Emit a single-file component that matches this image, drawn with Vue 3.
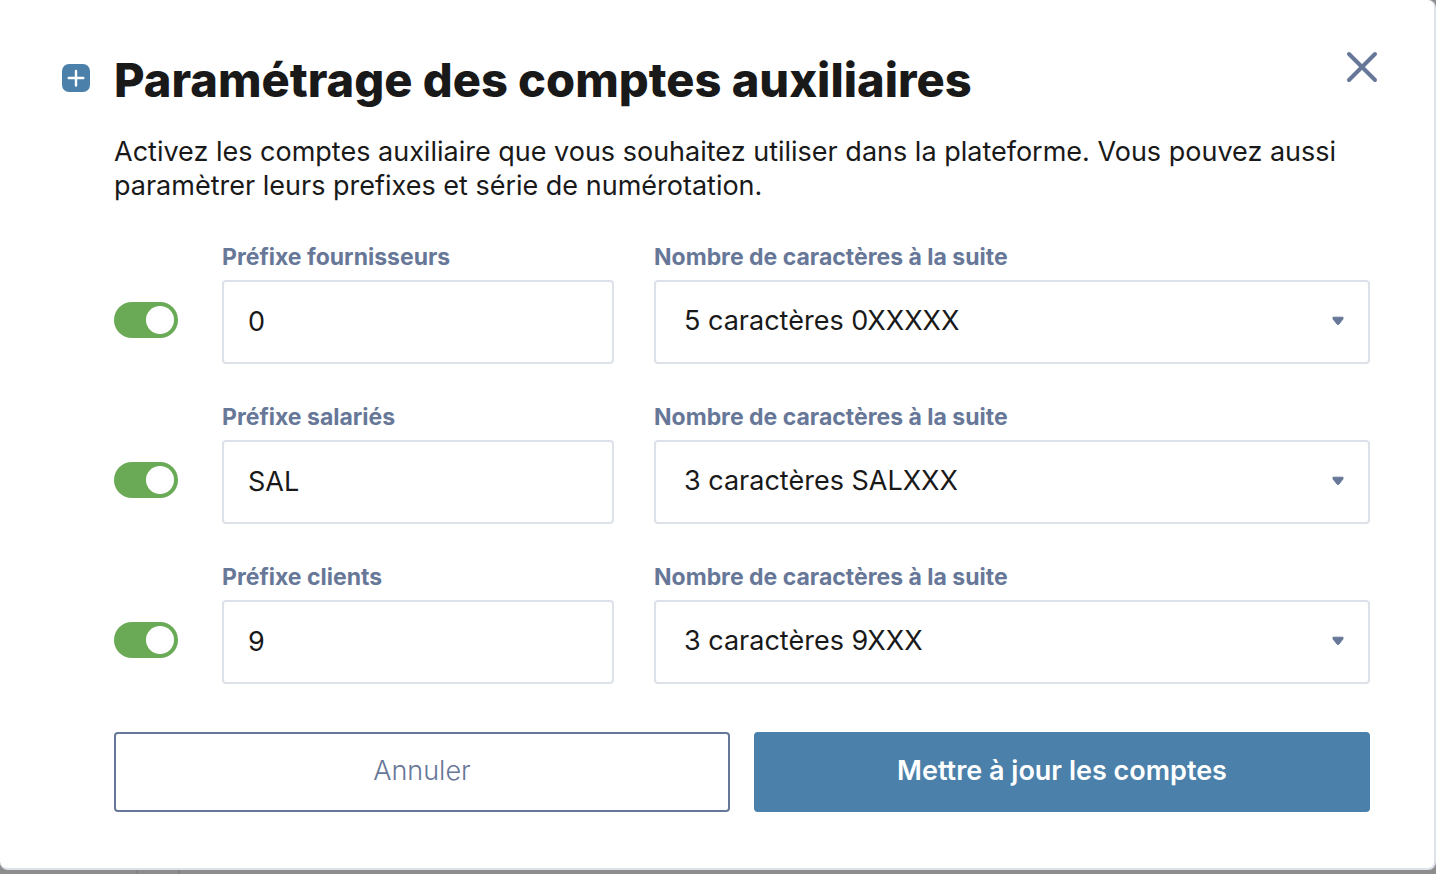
<script setup>
import { reactive } from 'vue'

const accounts = reactive([
  { id: 'fournisseurs', label: 'Préfixe fournisseurs', enabled: true, prefix: '0', length: '5 caractères 0XXXXX' },
  { id: 'salaries', label: 'Préfixe salariés', enabled: true, prefix: 'SAL', length: '3 caractères SALXXX' },
  { id: 'clients', label: 'Préfixe clients', enabled: true, prefix: '9', length: '3 caractères 9XXX' }
])
</script>

<template>
  <div class="backdrop">
    <section class="modal" role="dialog" aria-labelledby="dialog-title">
      <header class="header">
        <svg class="plus" viewBox="0 0 28 28" aria-hidden="true">
          <rect width="28" height="28" rx="7" fill="#4a80aa" />
          <path d="M14 7v14.5M6.7 14h14.6" stroke="#fff" stroke-width="2.4" stroke-linecap="round" />
        </svg>
        <h1 id="dialog-title" class="title">Paramétrage des comptes auxiliaires</h1>
        <button class="close" type="button" aria-label="Fermer">
          <svg viewBox="0 0 32 32" aria-hidden="true">
            <path d="M3 3l26 26M29 3L3 29" stroke="#677798" stroke-width="4" stroke-linecap="round" />
          </svg>
        </button>
      </header>

      <form class="content" @submit.prevent>
        <p class="intro">
          Activez les comptes auxiliaire que vous souhaitez utiliser dans la plateforme. Vous pouvez aussi
          paramètrer leurs prefixes et série de numérotation.
        </p>

        <div class="rows">
          <div v-for="account in accounts" :key="account.id" class="row">
            <input v-model="account.enabled" class="toggle" type="checkbox" :aria-label="account.label" />
            <div class="field prefix">
              <label :for="`prefix-${account.id}`">{{ account.label }}</label>
              <input :id="`prefix-${account.id}`" v-model="account.prefix" class="control" type="text" />
            </div>
            <div class="field length">
              <label :for="`length-${account.id}`">Nombre de caractères à la suite</label>
              <div class="select">
                <select :id="`length-${account.id}`" v-model="account.length" class="control">
                  <option>{{ account.length }}</option>
                </select>
                <svg class="caret" viewBox="0 0 12 10" aria-hidden="true">
                  <path d="M1 1.2h10v1.8L6.8 8.2q-.8.8-1.6 0L1 3z" fill="#677798" stroke="#677798" stroke-linejoin="round" />
                </svg>
              </div>
            </div>
          </div>
        </div>

        <div class="actions">
          <button class="button cancel" type="button">Annuler</button>
          <button class="button submit" type="submit">Mettre à jour les comptes</button>
        </div>
      </form>
    </section>
  </div>
</template>

<style>
body {
  background: linear-gradient(90deg, transparent 136px, #838286 136px 138px, transparent 138px 178px, #838286 178px 180px, transparent 180px) #8e8d8d;
}
</style>

<style scoped>
.backdrop {
  font-family: Inter, "Liberation Sans", sans-serif;
  color: #191919;
}
.modal {
  box-sizing: border-box;
  padding: 48px 0 56px;
  background: #fff;
  border: solid #dde1e9;
  border-width: 0 2px 2px 0;
  border-radius: 0 8px 8px 8px;
}
.header {
  display: flex;
  align-items: flex-start;
  gap: 24px;
  padding: 0 56px 0 62px;
}
.plus {
  flex: none;
  width: 28px;
  height: 28px;
  margin-top: 16px;
}
.title {
  flex: 1;
  margin: 0;
  font-size: 47px;
  line-height: 64px;
  font-weight: 800;
}
.close {
  flex: none;
  width: 32px;
  height: 32px;
  margin-top: 3px;
  padding: 0;
  border: 0;
  background: none;
}
.close svg {
  display: block;
}
.content {
  padding: 0 64px 0 114px;
}
.intro {
  margin: 23px 0 38px;
  font-size: 27px;
  line-height: 34px;
  font-weight: 400;
}
.rows {
  display: flex;
  flex-direction: column;
  gap: 37px;
}
.row {
  display: flex;
  align-items: flex-end;
}
.toggle {
  appearance: none;
  flex: none;
  display: flex;
  box-sizing: border-box;
  width: 64px;
  height: 36px;
  margin: 0 44px 26px 0;
  padding: 4px;
  border-radius: 18px;
  background: #a9afbd;
}
.toggle::before {
  content: "";
  width: 28px;
  height: 28px;
  border-radius: 50%;
  background: #fff;
}
.toggle:checked {
  justify-content: flex-end;
  background: #6aa956;
}
.field {
  display: flex;
  flex-direction: column;
  gap: 7px;
  min-width: 0;
}
.prefix {
  flex: 392 1 0;
  margin-right: 40px;
}
.length {
  flex: 716 1 0;
}
label {
  font-size: 23px;
  line-height: 32px;
  font-weight: 700;
  color: #677798;
}
.control {
  appearance: none;
  box-sizing: border-box;
  width: 100%;
  height: 84px;
  margin: 0;
  padding: 0 24px 2px;
  border: 2px solid #dde1e9;
  border-radius: 4px;
  background: #fff;
  color: #191919;
  font: 400 27px Inter, "Liberation Sans", sans-serif;
}
.select {
  display: grid;
  align-items: center;
}
.select > * {
  grid-area: 1 / 1;
}
.select .control {
  padding: 0 28px 4px;
}
.caret {
  justify-self: end;
  width: 12px;
  height: 10px;
  margin: 0 26px 2px 0;
  pointer-events: none;
}
.actions {
  display: flex;
  gap: 24px;
  margin-top: 48px;
}
.button {
  flex: 1;
  box-sizing: border-box;
  height: 80px;
  padding: 0 24px 4px;
  border: 2px solid #677798;
  border-radius: 4px;
  background: #fff;
  color: #677798;
  font: 300 27px Inter, "Liberation Sans", sans-serif;
}
.submit {
  border-color: #4a80aa;
  background: #4a80aa;
  color: #fff;
  font-weight: 600;
}
</style>
